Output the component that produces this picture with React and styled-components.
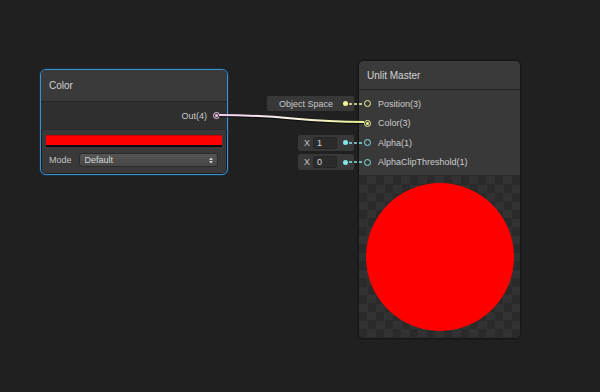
import React from "react";
import styled, { createGlobalStyle, css } from "styled-components";

const GlobalStyle = createGlobalStyle`
  html, body { margin: 0; padding: 0; background: #202020; }
  body { font-family: "Liberation Sans", Arial, sans-serif; }
`;

const YELLOW = "#f2f79a";
const CYAN = "#84e4e7";
const PINK = "#f3c6ee";

const Canvas = styled.div`
  position: relative;
  width: 600px;
  height: 392px;
  background: #202020;
  overflow: hidden;
`;

const EdgeLayer = styled.svg`
  position: absolute;
  inset: 0;
  width: 600px;
  height: 392px;
  z-index: 3;
  pointer-events: none;
`;

const Node = styled.div`
  position: absolute;
  left: ${(p) => p.$left}px;
  top: ${(p) => p.$top}px;
  width: ${(p) => p.$width}px;
  box-sizing: border-box;
  display: flex;
  flex-direction: column;
  border-radius: 6px;
  background: #393939;
  border: 1px solid ${(p) => (p.$selected ? "#3f8fca" : "#171717")};
  box-shadow: ${(p) =>
    p.$selected ? "0 0 0 1px #16303f, inset 0 0 0 1px #1c1c1c" : "0 0 0 1px #1b1b1b"};
  z-index: 2;
`;

const NodeHeader = styled.div`
  height: ${(p) => p.$h}px;
  display: flex;
  align-items: center;
  padding-left: 8px;
  background: #3a3a3a;
  border-radius: 5px 5px 0 0;
  border-bottom: 1px solid #272727;
  color: #d4d4d4;
  font-size: 10px;
  flex-shrink: 0;
`;

const OutputRow = styled.div`
  height: 27px;
  display: flex;
  align-items: center;
  justify-content: flex-end;
  gap: 6px;
  padding-right: 7px;
  background: #2f2f2f;
  border-bottom: 1px solid #2a2a2a;
  color: #c8c8c8;
  font-size: 9px;
`;

const Port = styled.span`
  position: relative;
  display: inline-block;
  width: 7px;
  height: 7px;
  box-sizing: border-box;
  border-radius: 50%;
  border: 1.4px solid ${(p) => p.$color};
  flex-shrink: 0;
  ${(p) =>
    p.$connected &&
    css`
      &::after {
        content: "";
        position: absolute;
        left: 50%;
        top: 50%;
        width: 3px;
        height: 3px;
        margin: -1.5px 0 0 -1.5px;
        border-radius: 50%;
        background: ${p.$color};
      }
    `}
`;

const ControlSection = styled.div`
  display: flex;
  flex-direction: column;
  padding: 5px 5px 7px 5px;
  gap: 6px;
  border-radius: 0 0 5px 5px;
`;

const ColorField = styled.div`
  height: 9px;
  background: #ff0000;
  border-top: 1px solid #c40000;
  border-bottom: 2px solid #0a0a0a;
`;

const ModeRow = styled.div`
  display: flex;
  align-items: center;
  gap: 7px;
  padding-left: 3px;
  padding-right: 4px;
  color: #c4c4c4;
  font-size: 9px;
`;

const Dropdown = styled.div`
  flex: 1;
  height: 14px;
  box-sizing: border-box;
  display: flex;
  align-items: center;
  justify-content: space-between;
  padding: 0 4px 0 5px;
  border-radius: 3px;
  border: 1px solid #2b2b2b;
  background: linear-gradient(#555555, #474747);
  color: #d6d6d6;
  font-size: 9px;
`;

const PortList = styled.div`
  display: flex;
  flex-direction: column;
  padding: 4px 0 3px 0;
  background: #393939;
`;

const PortRow = styled.div`
  position: relative;
  height: 19.5px;
  display: flex;
  align-items: center;
  gap: 7px;
  padding-left: 5px;
  color: #cbcbcb;
  font-size: 9px;
`;

const Connector = styled.span`
  position: absolute;
  left: -10px;
  width: 15px;
  top: 50%;
  height: 2px;
  margin-top: -1px;
  background: repeating-linear-gradient(
    to right,
    ${(p) => p.$color} 0 3px,
    transparent 3px 5px
  );
  opacity: 0.75;
`;

const InputWidget = styled.div`
  position: absolute;
  right: calc(100% + 5px);
  top: 50%;
  height: ${(p) => p.$h}px;
  margin-top: ${(p) => -p.$h / 2}px;
  width: ${(p) => p.$w}px;
  box-sizing: border-box;
  display: flex;
  align-items: center;
  justify-content: flex-end;
  padding-right: 6px;
  background: #383838;
  border-radius: 2px;
  color: #c6c6c6;
  font-size: 9px;
`;

const WidgetText = styled.span`
  margin-right: ${(p) => p.$gap}px;
`;

const NumberField = styled.span`
  width: 24px;
  height: 12px;
  box-sizing: border-box;
  display: flex;
  align-items: center;
  padding-left: 3px;
  margin-right: 6px;
  background: #2b2b2b;
  border: 1px solid #252525;
  border-radius: 2px;
  color: #d4d4d4;
`;

const Dot = styled.span`
  width: 5px;
  height: 5px;
  border-radius: 50%;
  background: ${(p) => p.$color};
  flex-shrink: 0;
`;

const Preview = styled.div`
  height: 162px;
  display: flex;
  align-items: center;
  justify-content: center;
  border-top: 1px solid #2c2c2c;
  border-radius: 0 0 5px 5px;
  background-color: #2a2a2a;
  background-image: conic-gradient(
    #323232 0 25%,
    #2a2a2a 0 50%,
    #323232 0 75%,
    #2a2a2a 0
  );
  background-size: 17px 17px;
`;

const PreviewBall = styled.div`
  width: 148px;
  height: 148px;
  border-radius: 50%;
  background: #ff0000;
`;

const UpDown = () => (
  <svg width="4" height="7" viewBox="0 0 4 7">
    <path d="M0 3 L2 0.5 L4 3 Z M0 4 L2 6.5 L4 4 Z" fill="#cfcfcf" />
  </svg>
);

const ports = [
  { label: "Position(3)", color: YELLOW, widget: "space" },
  { label: "Color(3)", color: YELLOW, connected: true },
  { label: "Alpha(1)", color: CYAN, widget: "x", value: "1" },
  { label: "AlphaClipThreshold(1)", color: CYAN, widget: "x", value: "0" },
];

export default function App() {
  return (
    <>
      <GlobalStyle />
      <Canvas>
        <Node $left={40} $top={69} $width={188} $selected>
          <NodeHeader $h={31}>Color</NodeHeader>
          <OutputRow>
            <span>Out(4)</span>
            <Port $color={PINK} $connected />
          </OutputRow>
          <ControlSection>
            <ColorField />
            <ModeRow>
              <span>Mode</span>
              <Dropdown>
                <span>Default</span>
                <UpDown />
              </Dropdown>
            </ModeRow>
          </ControlSection>
        </Node>

        <Node $left={358} $top={60} $width={163}>
          <NodeHeader $h={28}>Unlit Master</NodeHeader>
          <PortList>
            {ports.map((p) => (
              <PortRow key={p.label}>
                {p.widget === "space" && (
                  <InputWidget $w={87} $h={15}>
                    <WidgetText $gap={10}>Object Space</WidgetText>
                    <Dot $color={p.color} />
                  </InputWidget>
                )}
                {p.widget === "x" && (
                  <InputWidget $w={56} $h={16}>
                    <WidgetText $gap={3}>X</WidgetText>
                    <NumberField>{p.value}</NumberField>
                    <Dot $color={p.color} />
                  </InputWidget>
                )}
                {p.widget && <Connector $color={p.color} />}
                <Port $color={p.color} $connected={p.connected} />
                <span>{p.label}</span>
              </PortRow>
            ))}
          </PortList>
          <Preview>
            <PreviewBall />
          </Preview>
        </Node>

        <EdgeLayer viewBox="0 0 600 392">
          <defs>
            <linearGradient id="edge" gradientUnits="userSpaceOnUse" x1="219" y1="0" x2="364" y2="0">
              <stop offset="0" stopColor="#f1cbed" />
              <stop offset="0.45" stopColor="#fbf4f0" />
              <stop offset="1" stopColor="#eef08c" />
            </linearGradient>
          </defs>
          <path
            d="M219 116.2 C 290 116.2, 295 123.2, 364 123.2"
            fill="none"
            stroke="#0c0c0c"
            strokeWidth="2.2"
            opacity="0.8"
          />
          <path
            d="M219 115 C 290 115, 295 122, 364 122"
            fill="none"
            stroke="url(#edge)"
            strokeWidth="2"
          />
        </EdgeLayer>
      </Canvas>
    </>
  );
}
